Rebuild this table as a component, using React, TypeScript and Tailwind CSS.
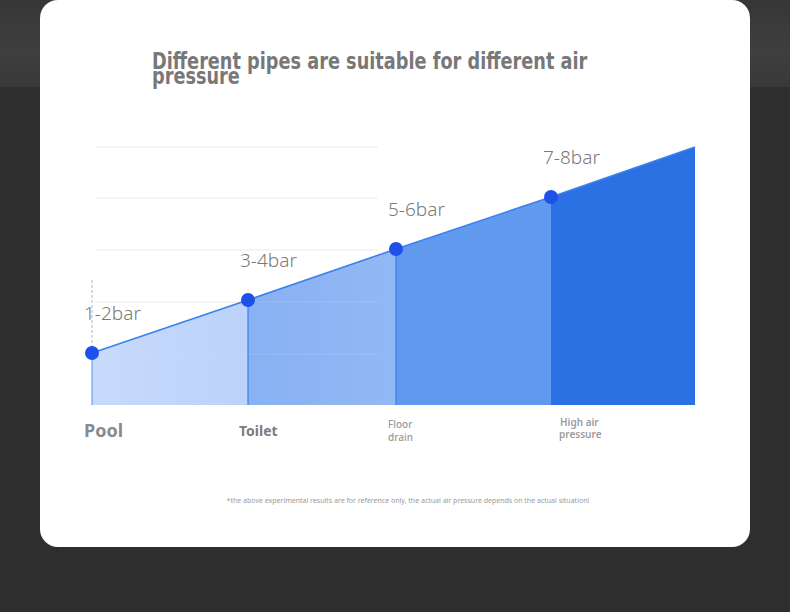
export default function App() {
  const grid = [147, 198, 250, 302, 354];
  const pts = [
    { x: 92, y: 353, label: "1-2bar" },
    { x: 248, y: 300, label: "3-4bar" },
    { x: 396, y: 249, label: "5-6bar" },
    { x: 551, y: 197, label: "7-8bar" },
  ];
  const base = 405;

  return (
    <div className="w-full h-[612px] overflow-hidden bg-[linear-gradient(to_bottom,#363636_0px,#3f3f3f_50px,#393939_87px,#2e2e2e_87px)]">
      <div className="ml-[40px] w-[710px] h-[547px] bg-white rounded-[18px] flex flex-col">
        <div className="pl-[112px] pt-[54px] h-[130px]">
          <h1 className="origin-left scale-x-[0.77] whitespace-nowrap text-[23px] font-bold leading-[15px] text-[#787878] font-['DejaVu_Sans',sans-serif]">
            Different pipes are suitable for different air
            <br />
            pressure
          </h1>
        </div>

        <svg width="710" height="330" viewBox="40 130 710 330" className="font-['Noto_Sans',sans-serif]">
          <defs>
            <linearGradient id="g1" x1="0" x2="1" y1="0" y2="0">
              <stop offset="0" stopColor="#c8dafc" />
              <stop offset="1" stopColor="#bbd2fa" />
            </linearGradient>
            <linearGradient id="g2" x1="0" x2="1" y1="0" y2="0">
              <stop offset="0" stopColor="#88b1f3" />
              <stop offset="1" stopColor="#92b9f4" />
            </linearGradient>
          </defs>

          {grid.map((y) => (
            <line key={y} x1="95" x2="378" y1={y} y2={y} stroke="#ebebeb" strokeWidth="1" />
          ))}
          <line x1="92" x2="92" y1="280" y2="353" stroke="#b5b5b5" strokeWidth="1" strokeDasharray="3 2" />

          <polygon points={`92,${base} 92,353 248,300 248,${base}`} fill="url(#g1)" />
          <polygon points={`248,${base} 248,300 396,249 396,${base}`} fill="url(#g2)" />
          <polygon points={`396,${base} 396,249 551,197 551,${base}`} fill="#6199ee" />
          <polygon points={`551,${base} 551,197 695,147 695,${base}`} fill="#2b71e3" />

          {grid.slice(3).map((y) => (
            <line key={"o" + y} x1="92" x2="378" y1={y} y2={y} stroke="#ffffff" strokeOpacity="0.12" strokeWidth="1" />
          ))}

          <line x1="92" x2="92" y1="353" y2={base} stroke="#5b8fe8" strokeWidth="1" />
          <line x1="248" x2="248" y1="300" y2={base} stroke="#3f7fe8" strokeWidth="1.2" />
          <line x1="396" x2="396" y1="249" y2={base} stroke="#3f7fe8" strokeWidth="1.2" />
          <polyline points="92,353 248,300 396,249 551,197 695,147" fill="none" stroke="#3a80ee" strokeWidth="1.6" />

          {pts.map((p) => (
            <circle key={p.label} cx={p.x} cy={p.y} r="7" fill="#1e50ea" />
          ))}
          {pts.map((p) => (
            <text key={p.label + "t"} x={p.x - 8} y={p.y - 33} fontSize="19" fontWeight="300" fill="#7a7a7a">
              {p.label}
            </text>
          ))}

          <text x="84" y="437" fontSize="18" fontWeight="700" fill="#8a8a8a">Pool</text>
          <text x="239" y="436" fontSize="14" fontWeight="700" fill="#7c7c7c">Toilet</text>
          <text x="388" y="428" fontSize="10" fontWeight="500" fill="#9a9a9a">Floor</text>
          <text x="388" y="441" fontSize="10" fontWeight="500" fill="#9a9a9a">drain</text>
          <text x="560" y="426" fontSize="10" fontWeight="600" fill="#9c9c9c">High air</text>
          <text x="559" y="438" fontSize="10" fontWeight="600" fill="#9c9c9c">pressure</text>
        </svg>

        <p className="mt-[36px] pl-[26px] text-center text-[7px] text-[#9a9a9a] font-['Noto_Sans',sans-serif]">
          *the above experimental results are for reference only, the actual air pressure depends on the actual situation!
        </p>
      </div>
    </div>
  );
}
